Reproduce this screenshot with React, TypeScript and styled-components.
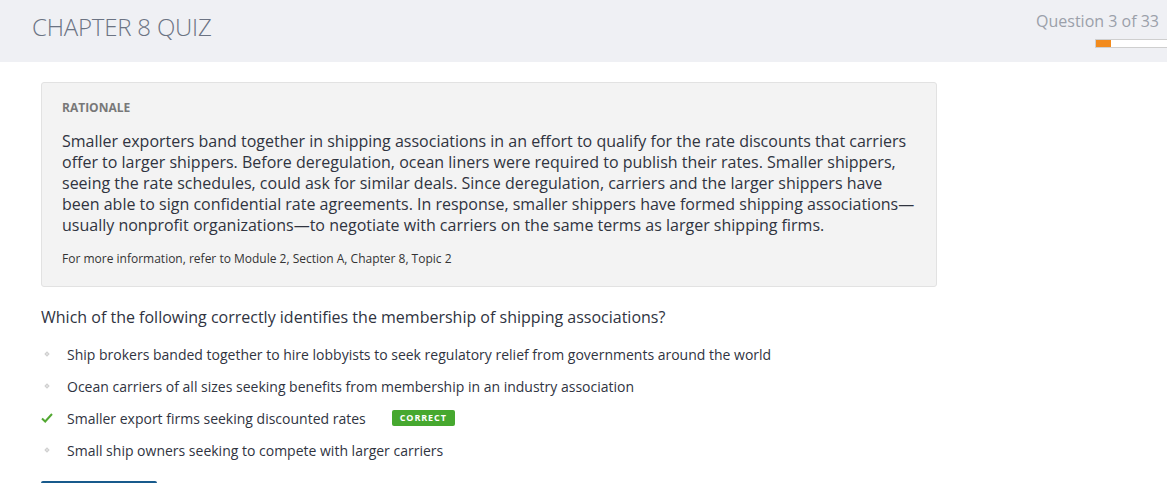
import React from "react";
import styled, { createGlobalStyle } from "styled-components";

const Global = createGlobalStyle`
  html, body { margin: 0; padding: 0; background: #ffffff; }
  body { font-family: "Open Sans", "Liberation Sans", sans-serif; color: #333; }
  * { box-sizing: border-box; }
`;

const Header = styled.header`
  height: 62px;
  background: #eff0f4;
  display: flex;
  justify-content: space-between;
  align-items: flex-start;
`;

const Title = styled.h1`
  margin: 0;
  padding: 11px 0 0 32px;
  font-size: 24px;
  line-height: 32px;
  font-weight: 300;
  color: #6b7383;
  letter-spacing: -0.2px;
`;

const Progress = styled.div`
  display: flex;
  flex-direction: column;
  align-items: flex-end;
  padding-top: 10px;
`;

const Counter = styled.div`
  font-size: 16px;
  line-height: 22px;
  color: #9ba0aa;
  padding-right: 8px;
`;

const Track = styled.div`
  margin-top: 7px;
  width: 72px;
  height: 9px;
  background: #ffffff;
  border: 1px solid #cfcfcf;
  border-right: none;
  border-radius: 1px 0 0 1px;
  display: flex;
`;

const Fill = styled.div`
  height: 100%;
  background: #f28b1e;
`;

const Main = styled.main`
  padding: 20px 0 0 41px;
`;

const Rationale = styled.section`
  width: 896px;
  background: #f3f3f3;
  border: 1px solid #e2e2e2;
  border-radius: 3px;
  padding: 16px 16px 19px 20px;
`;

const Label = styled.div`
  font-size: 12px;
  line-height: 17px;
  font-weight: 700;
  color: #787878;
`;

const Body = styled.p`
  margin: 15px 0 0;
  font-size: 16px;
  line-height: 21px;
  color: #30343f;
`;

const Ref = styled.p`
  margin: 14px 0 0;
  font-size: 12px;
  line-height: 17px;
  color: #333;
`;

const Question = styled.p`
  margin: 19px 0 0;
  font-size: 16px;
  line-height: 22px;
  color: #30343f;
`;

const Options = styled.ul`
  list-style: none;
  margin: 10px 0 0 -14px;
  padding: 0;
`;

const Option = styled.li`
  height: 32px;
  display: flex;
  align-items: center;
  font-size: 14px;
  color: #30343f;
`;

const Marker = styled.span`
  width: 40px;
  display: flex;
  justify-content: center;
  align-items: center;
`;

const Badge = styled.span`
  margin-left: 26px;
  background: #46a82f;
  color: #fff;
  font-size: 9px;
  font-weight: 700;
  letter-spacing: 0.9px;
  border-radius: 2px;
  padding: 1px 8px;
  line-height: 14px;
`;

const Button = styled.div`
  margin-top: 15px;
  width: 116px;
  height: 36px;
  background: #185a8c;
  border-radius: 2px;
`;

const Diamond = () => (
  <svg width="6" height="6" viewBox="0 0 6 6">
    <path d="M3 0.3 L5.7 3 L3 5.7 L0.3 3 Z" fill="#cfcfcf" />
    <path d="M3 1.8 L4.2 3 L3 4.2 L1.8 3 Z" fill="#e4e4e4" />
  </svg>
);

const Check = () => (
  <svg width="12" height="10" viewBox="0 0 12 10">
    <path d="M1 5.5 L4.2 8.5 L11 1" fill="none" stroke="#52a832" strokeWidth="2" />
  </svg>
);

const options = [
  { text: "Ship brokers banded together to hire lobbyists to seek regulatory relief from governments around the world", correct: false },
  { text: "Ocean carriers of all sizes seeking benefits from membership in an industry association", correct: false },
  { text: "Smaller export firms seeking discounted rates", correct: true },
  { text: "Small ship owners seeking to compete with larger carriers", correct: false },
];

const current = 3;
const total = 33;

export default function App() {
  return (
    <>
      <Global />
      <Header>
        <Title>CHAPTER 8 QUIZ</Title>
        <Progress>
          <Counter>Question {current} of {total}</Counter>
          <Track>
            <Fill style={{ width: `${Math.round((current / total) * 165)}px` }} />
          </Track>
        </Progress>
      </Header>
      <Main>
        <Rationale>
          <Label>RATIONALE</Label>
          <Body>
            Smaller exporters band together in shipping associations in an effort to qualify for the rate discounts that carriers offer to larger shippers. Before deregulation, ocean liners were required to publish their rates. Smaller shippers, seeing the rate schedules, could ask for similar deals. Since deregulation, carriers and the larger shippers have been able to sign confidential rate agreements. In response, smaller shippers have formed shipping associations—usually nonprofit organizations—to negotiate with carriers on the same terms as larger shipping firms.
          </Body>
          <Ref>For more information, refer to Module 2, Section A, Chapter 8, Topic 2</Ref>
        </Rationale>
        <Question>Which of the following correctly identifies the membership of shipping associations?</Question>
        <Options>
          {options.map((o) => (
            <Option key={o.text}>
              <Marker>{o.correct ? <Check /> : <Diamond />}</Marker>
              {o.text}
              {o.correct && <Badge>CORRECT</Badge>}
            </Option>
          ))}
        </Options>
        <Button />
      </Main>
    </>
  );
}
